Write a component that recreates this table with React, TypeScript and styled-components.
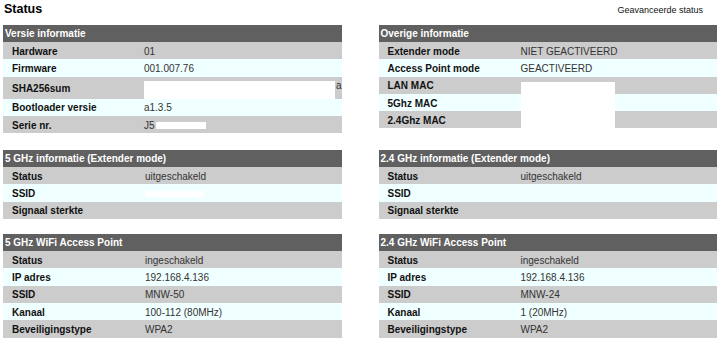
import React from "react"
import styled, { createGlobalStyle } from "styled-components"

const GlobalStyle = createGlobalStyle`
  body {
    margin: 0;
    background: #ffffff;
    font-family: "Liberation Sans", Arial, sans-serif;
  }
`

const Page = styled.div`
  padding: 2px 5px 0 3px;
`

const TitleBar = styled.div`
  display: flex;
  justify-content: space-between;
  align-items: baseline;
  height: 23px;
`

const Title = styled.h1`
  margin: 0;
  padding-left: 1px;
  font-size: 12.5px;
  line-height: 15px;
  font-weight: bold;
  color: #000;
`

const AdvancedLink = styled.a`
  font-size: 9px;
  color: #111;
  text-decoration: none;
  margin-right: 14px;
  cursor: pointer;
`

const Columns = styled.div<{ $after: number }>`
  display: grid;
  grid-template-columns: 1fr 1fr;
  column-gap: 37px;
  align-items: start;
  margin-bottom: ${p => p.$after}px;
`

const Table = styled.table`
  width: 100%;
  border-collapse: collapse;
  font-size: 10px;
`

const HeadCell = styled.th`
  background: #606060;
  color: #ffffff;
  text-align: left;
  font-weight: bold;
  height: 17px;
  padding: 0 0 0 2px;
`

const Row = styled.tr<{ $alt: boolean; $tall?: boolean }>`
  background: ${p => (p.$alt ? "#f0ffff" : "#cccccc")};
  height: ${p => (p.$tall ? 21 : 17.3)}px;
`

const LabelCell = styled.td`
  width: 133px;
  padding: 1px 0 0 9px;
  font-weight: bold;
  color: #111;
  white-space: nowrap;
`

const ValueCell = styled.td`
  position: relative;
  padding: 1px 0 0 0;
  color: #333;
  white-space: nowrap;
`

const Redact = styled.span<{ $w: number; $h: number }>`
  display: inline-block;
  width: ${p => p.$w}px;
  height: ${p => p.$h}px;
  background: #ffffff;
  vertical-align: middle;
`

// white box laid over a value that was blanked out (spans several rows)
const RedactOverlay = styled.span<{ $w: number; $h: number }>`
  position: absolute;
  left: 0;
  top: 5px;
  width: ${p => p.$w}px;
  height: ${p => p.$h}px;
  background: #ffffff;
`

const ShaValue = styled.span`
  display: flex;
  align-items: flex-start;
  height: 21px;
  padding-top: 3px;
  box-sizing: border-box;
  span:last-child {
    line-height: 10px;
    margin-left: 1px;
  }
`

type Item = { label: string; value?: React.ReactNode; tall?: boolean }

function InfoTable({ title, rows }: { title: string; rows: Item[] }) {
  return (
    <Table>
      <thead>
        <tr>
          <HeadCell colSpan={2}>{title}</HeadCell>
        </tr>
      </thead>
      <tbody>
        {rows.map((r, i) => (
          <Row key={r.label} $alt={i % 2 === 1} $tall={r.tall}>
            <LabelCell>{r.label}</LabelCell>
            <ValueCell>{r.value}</ValueCell>
          </Row>
        ))}
      </tbody>
    </Table>
  )
}

const versie: Item[] = [
  { label: "Hardware", value: "01" },
  { label: "Firmware", value: "001.007.76" },
  {
    label: "SHA256sum",
    tall: true,
    value: (
      <ShaValue>
        <Redact $w={191} $h={18} />
        <span>a</span>
      </ShaValue>
    ),
  },
  { label: "Bootloader versie", value: "a1.3.5" },
  {
    label: "Serie nr.",
    value: (
      <>
        J5<Redact $w={50} $h={7} style={{ marginLeft: 1 }} />
      </>
    ),
  },
]

const overig: Item[] = [
  { label: "Extender mode", value: "NIET GEACTIVEERD" },
  { label: "Access Point mode", value: "GEACTIVEERD" },
  { label: "LAN MAC", value: <RedactOverlay $w={94} $h={47} /> },
  { label: "5Ghz MAC" },
  { label: "2.4Ghz MAC" },
]

const ext5: Item[] = [
  { label: "Status", value: "uitgeschakeld" },
  { label: "SSID", value: <Redact $w={59} $h={6} /> },
  { label: "Signaal sterkte" },
]

const ext24: Item[] = [
  { label: "Status", value: "uitgeschakeld" },
  { label: "SSID" },
  { label: "Signaal sterkte" },
]

const ap5: Item[] = [
  { label: "Status", value: "ingeschakeld" },
  { label: "IP adres", value: "192.168.4.136" },
  { label: "SSID", value: "MNW-50" },
  { label: "Kanaal", value: "100-112 (80MHz)" },
  { label: "Beveiligingstype", value: "WPA2" },
]

const ap24: Item[] = [
  { label: "Status", value: "ingeschakeld" },
  { label: "IP adres", value: "192.168.4.136" },
  { label: "SSID", value: "MNW-24" },
  { label: "Kanaal", value: "1 (20MHz)" },
  { label: "Beveiligingstype", value: "WPA2" },
]

export default function App() {
  return (
    <Page>
      <GlobalStyle />
      <TitleBar>
        <Title>Status</Title>
        <AdvancedLink>Geavanceerde status</AdvancedLink>
      </TitleBar>
      <Columns $after={17}>
        <InfoTable title="Versie informatie" rows={versie} />
        <InfoTable title="Overige informatie" rows={overig} />
      </Columns>
      <Columns $after={15}>
        <InfoTable title="5 GHz informatie (Extender mode)" rows={ext5} />
        <InfoTable title="2.4 GHz informatie (Extender mode)" rows={ext24} />
      </Columns>
      <Columns $after={0}>
        <InfoTable title="5 GHz WiFi Access Point" rows={ap5} />
        <InfoTable title="2.4 GHz WiFi Access Point" rows={ap24} />
      </Columns>
    </Page>
  )
}
